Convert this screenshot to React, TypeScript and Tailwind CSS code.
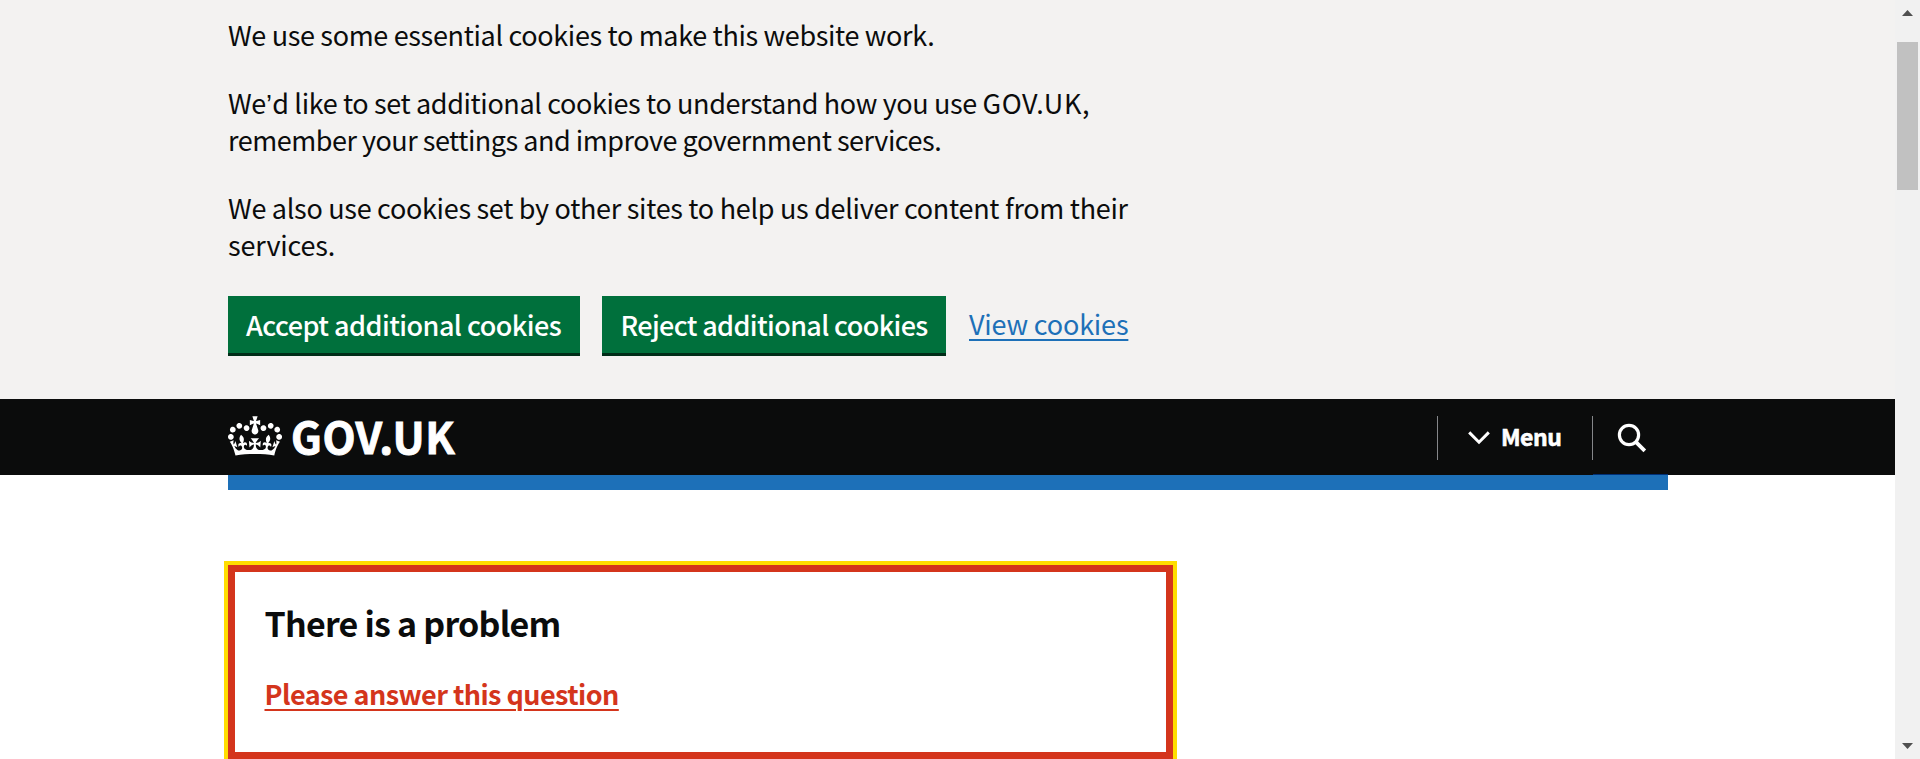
import React from "react";

function Crown() {
  return (
    <svg viewBox="0 0 132 97" className="mt-[17px] h-[40px] w-[54px] shrink-0" fill="currentColor" aria-hidden="true">
      <path
        fillRule="evenodd"
        d="M25 30.2c3.5 1.5 7.7-.2 9.1-3.7 1.5-3.6-.2-7.8-3.9-9.2-3.6-1.4-7.6.3-9.1 3.9-1.4 3.5.3 7.5 3.9 9zM9 39.5c3.6 1.5 7.8-.2 9.2-3.7 1.5-3.6-.2-7.8-3.9-9.1-3.6-1.5-7.6.2-9.1 3.8-1.4 3.5.3 7.5 3.8 9zM4.4 57.2c3.5 1.5 7.7-.2 9.1-3.8 1.5-3.6-.2-7.7-3.9-9.1-3.5-1.5-7.6.3-9.1 3.8-1.4 3.5.3 7.6 3.9 9.1zm38.3-21.4c3.5 1.5 7.7-.2 9.1-3.8 1.5-3.6-.2-7.7-3.9-9.1-3.6-1.5-7.6.3-9.1 3.8-1.3 3.6.4 7.7 3.9 9.1zm64.4-5.6c-3.6 1.5-7.8-.2-9.1-3.7-1.5-3.6.2-7.8 3.8-9.2 3.6-1.4 7.7.3 9.2 3.9 1.3 3.5-.4 7.5-3.9 9zm15.9 9.3c-3.6 1.5-7.7-.2-9.1-3.7-1.5-3.6.2-7.8 3.7-9.1 3.6-1.5 7.7.2 9.2 3.8 1.5 3.5-.3 7.5-3.8 9zm4.7 17.7c-3.6 1.5-7.8-.2-9.2-3.8-1.5-3.6.2-7.7 3.9-9.1 3.6-1.5 7.7.3 9.2 3.8 1.3 3.5-.4 7.6-3.9 9.1zM89.3 35.8c-3.6 1.5-7.8-.2-9.2-3.8-1.4-3.6.2-7.7 3.9-9.1 3.6-1.5 7.7.3 9.2 3.8 1.4 3.6-.3 7.7-3.9 9.1zM69.7 17.7l8.9 4.7V9.3l-8.9 2.8c-.2-.3-.5-.6-.9-.9L72.4 0H59.6l3.5 11.2c-.3.3-.6.5-.9.9l-8.8-2.8v13.1l8.8-4.7c.3.3.6.7.9.9l-5 15.4v.1c-.2.8-.4 1.6-.4 2.4 0 4.1 3.1 7.5 7 8.1h.2c.3 0 .7.1 1 .1.4 0 .7 0 1-.1h.2c4-.6 7.1-4.1 7.1-8.1 0-.8-.1-1.7-.4-2.4V34l-5.1-15.4c.4-.2.7-.6 1-.9zM66 92.8c16.9 0 32.8 1.1 47.1 3.2 4-16.9 8.9-26.7 14-33.5l-9.6-3.4c1 4.9 1.1 7.2 0 10.2-1.5-1.4-3-4.3-4.2-8.7L108.6 76c2.8-2 5-3.2 7.5-3.3-4.4 9.4-10 11.9-13.6 11.2-4.3-.8-6.3-4.6-5.6-7.9 1-4.7 5.7-5.9 8-.5 4.3-8.7-3-11.4-7.6-8.8 7.1-7.2 7.9-13.5 2.1-21.1-8 6.1-8.1 12.3-4.5 20.8-4.7-5.4-12.1-2.5-9.5 6.2 3.4-5.2 7.9-2 7.2 3.1-.6 4.3-6.4 7.8-13.5 7.2-10.3-.9-10.9-8-11.2-13.8 2.5-.5 7.1 1.8 11 7.3L80.2 60c-4.1 4.4-8 5.3-12.3 5.4 1.4-4.4 8-11.6 8-11.6H55.5s6.4 7.2 7.9 11.6c-4.2-.1-8-1-12.3-5.4l1.4 16.4c3.9-5.5 8.5-7.7 10.9-7.3-.3 5.8-.9 12.8-11.1 13.8-7.2.6-12.9-2.9-13.5-7.2-.7-5 3.8-8.3 7.1-3.1 2.7-8.7-4.6-11.6-9.4-6.2 3.7-8.5 3.6-14.7-4.6-20.8-5.8 7.6-5 13.9 2.2 21.1-4.7-2.6-11.9.1-7.7 8.8 2.3-5.5 7.1-4.2 8.1.5.7 3.3-1.3 7.1-5.7 7.9-3.5.7-9-1.8-13.5-11.2 2.5.1 4.7 1.3 7.5 3.3l-4.7-15.4c-1.2 4.4-2.7 7.2-4.3 8.7-1.1-3-.9-5.3 0-10.2l-9.5 3.4c5 6.9 9.9 16.7 14 33.5 14.8-2.1 30.8-3.2 47.7-3.2z"
      />
    </svg>
  );
}

function CookieBanner() {
  return (
    <section className="h-[399px] bg-[#f3f2f1] pl-[228px] pt-[16px]">
      <div className="flex flex-col gap-[30px] whitespace-nowrap leading-[37.5px]">
        <p className="tracking-[-0.34px]">We use some essential cookies to make this website work.</p>
        <p>
          <span className="block tracking-[-0.38px]">
            We<span className="font-['Liberation_Sans'] leading-none tracking-[0.4px]">’</span>d like to set additional cookies to understand how you use{" "}
            <span className="tracking-[0.65px]">GOV.UK,</span>
          </span>
          <span className="block tracking-[-0.48px]">remember your settings and improve government services.</span>
        </p>
        <p>
          <span className="block tracking-[-0.3px]">
            We also use cookies set by other sites to help us deliver content from their
          </span>
          <span className="block tracking-[-0.15px]">services.</span>
        </p>
      </div>
      <div className="mt-[32.5px] flex h-[57px] whitespace-nowrap leading-[56px]">
        <button className="w-[352px] bg-[#00703c] pl-[18px] text-left font-medium leading-[54px] tracking-[-0.54px] text-white shadow-[0_3px_0_#002d18]">
          Accept additional cookies
        </button>
        <button className="ml-[22px] w-[344px] bg-[#00703c] pl-[18.5px] text-left font-medium leading-[54px] tracking-[-0.64px] text-white shadow-[0_3px_0_#002d18]">
          Reject additional cookies
        </button>
        <a href="#" className="ml-[23px] tracking-[-0.18px] text-[#1d70b8] underline decoration-2 underline-offset-4">
          View cookies
        </a>
      </div>
    </section>
  );
}

function Header() {
  return (
    <header className="flex h-[76px] bg-[#0b0c0c] pl-[228px] pr-[227px] font-bold text-white">
      <a href="#" className="flex">
        <Crown />
        <span className="ml-[9px] text-[43px] leading-[72px] tracking-[0.6px] [-webkit-text-stroke:0.9px_white]">GOV.UK</span>
      </a>
      <div className="ml-auto flex">
        <button className="mt-[17px] flex h-[44px] w-[155px] items-start border-l border-[#85878a]">
          <svg viewBox="0 0 22 14" className="ml-[30px] mt-[15px] h-[14px] w-[22px]" fill="none" stroke="currentColor" strokeWidth="3">
            <path d="M1.2 1.4 11 11.2 20.8 1.4" />
          </svg>
          <span className="ml-[11px] text-[23px] leading-[40px] tracking-[-0.5px] [-webkit-text-stroke:0.6px_white]">Menu</span>
        </button>
        <button aria-label="Search" className="flex h-[76px] w-[76px] flex-col">
          <span className="mt-[17px] flex h-[44px] w-full border-l border-[#85878a]">
            <svg viewBox="0 0 30 30" className="ml-[24px] mt-[7px] h-[30px] w-[30px]" fill="none" stroke="currentColor" strokeWidth="3.2">
              <circle cx="12" cy="12" r="9.6" />
              <path d="m18.8 18.8 9 9" strokeWidth="3.8" />
            </svg>
          </span>
          <span className="ml-px mt-[14px] h-px w-[75px] bg-[#003078]" />
        </button>
      </div>
    </header>
  );
}

function ScrollBar() {
  return (
    <div className="flex w-[25px] flex-col items-center bg-[#f1f1f1] text-[#505050]">
      <svg viewBox="0 0 11 6" className="mt-[10px] h-[6px] w-[11px] shrink-0" fill="currentColor">
        <path d="M5.5 0 11 6H0z" />
      </svg>
      <div className="mt-[26px] h-[148px] w-[21px] bg-[#c1c1c1]" />
      <svg viewBox="0 0 11 6" className="mb-[10px] mt-auto h-[6px] w-[11px] shrink-0" fill="currentColor">
        <path d="M0 0h11L5.5 6z" />
      </svg>
    </div>
  );
}

export default function App() {
  return (
    <div className="flex h-[759px] w-[1920px] overflow-hidden bg-white font-['Noto_Sans_CJK_SC','Noto_Sans',sans-serif] text-[27px] text-[#0b0c0c]">
      <div className="flex w-[1895px] flex-col">
        <CookieBanner />
        <Header />
        <div className="ml-[228px] h-[15px] w-[1440px] shrink-0 bg-[#1d70b8]" />
        <main className="pl-[228px] pt-[75px]">
          <div className="h-[194px] w-[945px] whitespace-nowrap border-[7px] border-[#d4351c] pl-[29.5px] pt-[28px] font-bold outline-4 outline-[#ffdd00]">
            <h2 className="text-[34px] leading-[45px] tracking-[-0.78px]">There is a problem</h2>
            <a
              href="#"
              className="mt-[30px] block w-fit leading-[38px] tracking-[-0.56px] text-[#d4351c] underline decoration-2 underline-offset-4"
            >
              Please answer this question
            </a>
          </div>
        </main>
      </div>
      <ScrollBar />
    </div>
  );
}
